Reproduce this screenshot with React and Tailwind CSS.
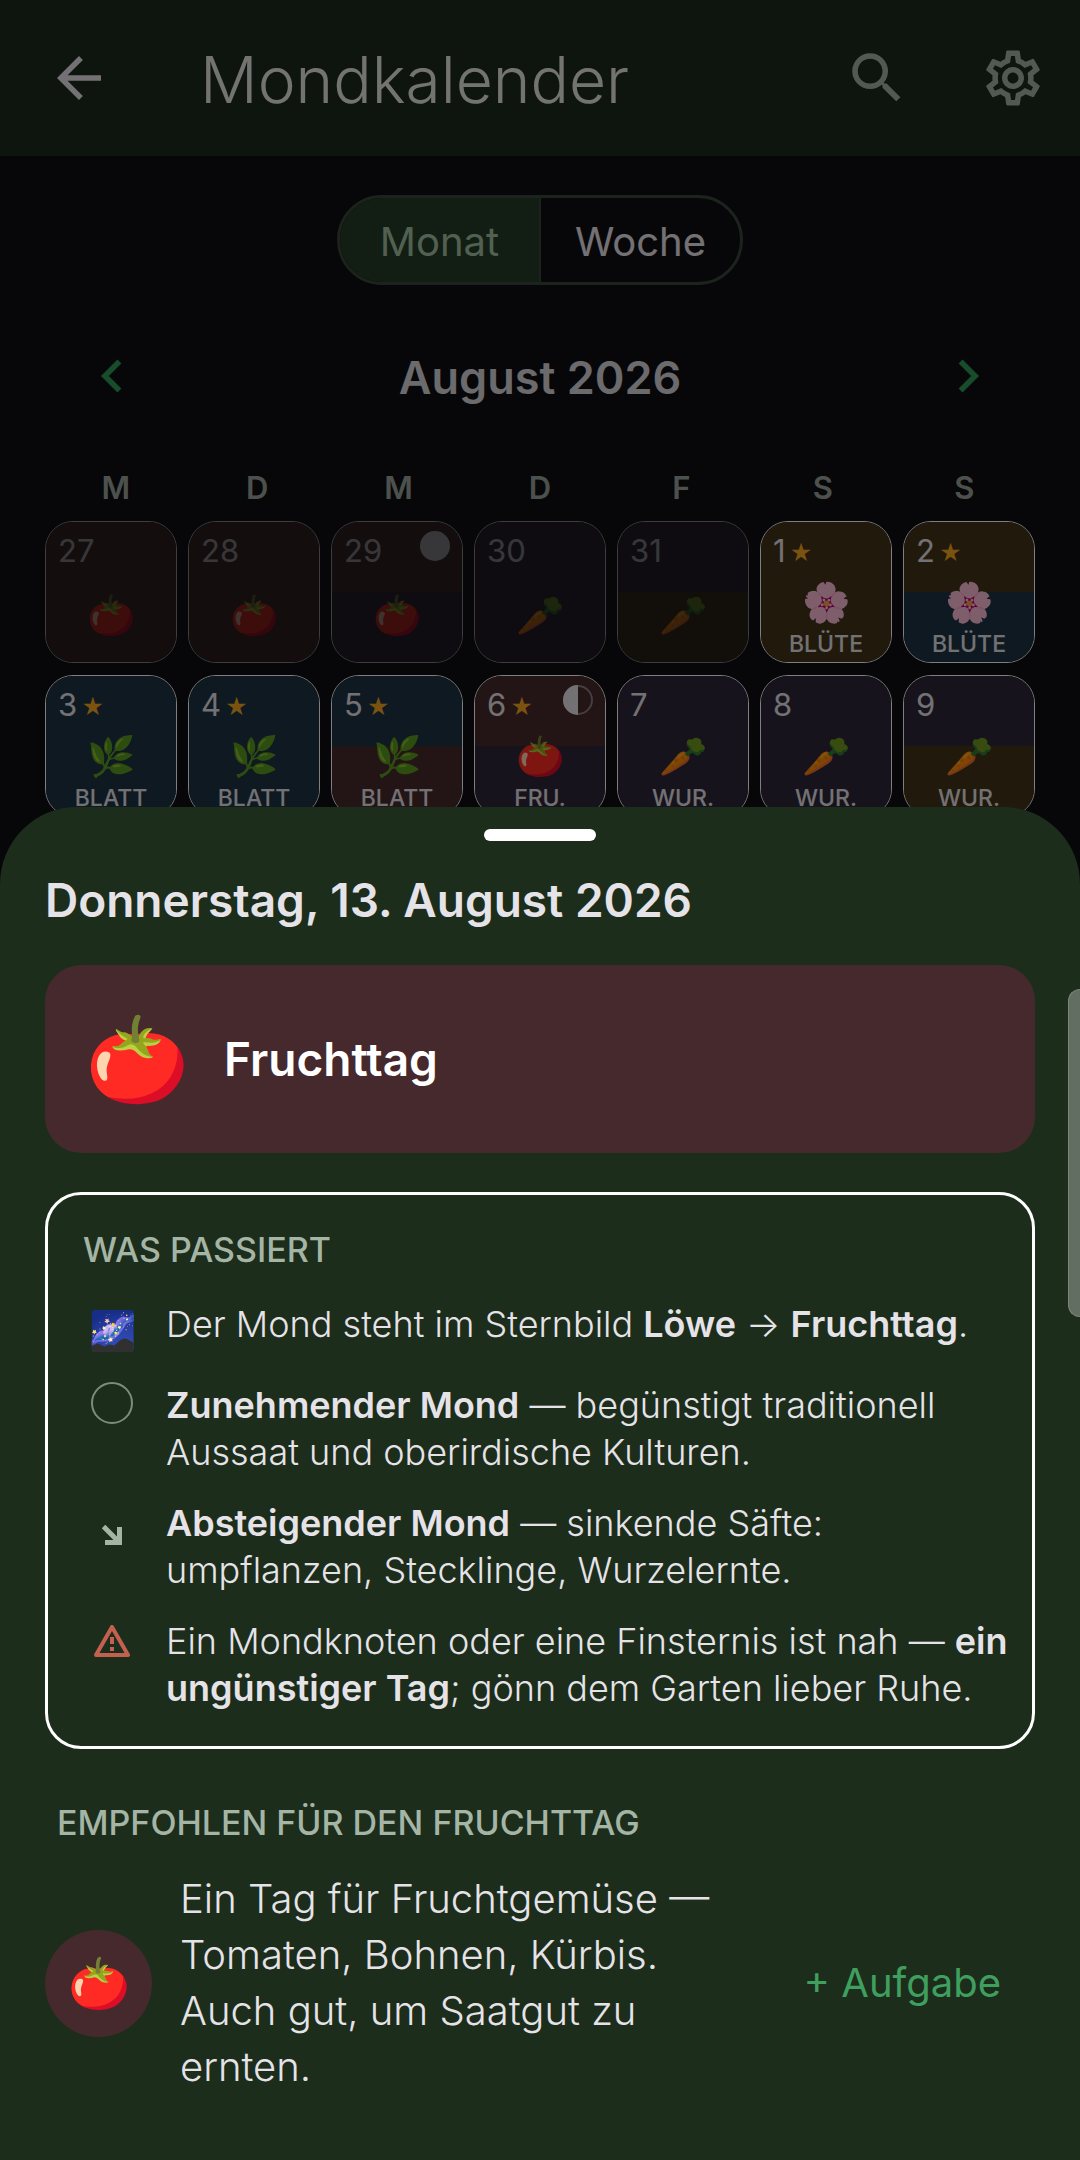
import { MdArrowBack, MdSearch, MdOutlineSettings, MdChevronLeft, MdChevronRight } from "react-icons/md";

const weekdays = ["M", "D", "M", "D", "F", "S", "S"];

const types = {
  fruit: { emoji: "🍅", label: "FRU." },
  root: { emoji: "🥕", label: "WUR." },
  flower: { emoji: "🌸", label: "BLÜTE" },
  leaf: { emoji: "🌿", label: "BLATT" },
};

const backgrounds = {
  fruit: "bg-[#46292c]",
  root: "bg-[#2e2638]",
  flower: "bg-[#403318]",
  leaf: "bg-[#1c3343]",
};

const days = [
  { day: 27, type: "fruit", outside: true },
  { day: 28, type: "fruit", outside: true },
  { day: 29, type: "fruit", next: "root", moon: "full", outside: true },
  { day: 30, type: "root", outside: true },
  { day: 31, type: "root", next: "flower", outside: true },
  { day: 1, type: "flower", star: true },
  { day: 2, type: "flower", next: "leaf", star: true },
  { day: 3, type: "leaf", star: true },
  { day: 4, type: "leaf", star: true },
  { day: 5, type: "leaf", next: "fruit", star: true },
  { day: 6, type: "fruit", next: "root", moon: "half", star: true },
  { day: 7, type: "root" },
  { day: 8, type: "root" },
  { day: 9, type: "root", next: "flower" },
];

function Header() {
  return (
    <header className="flex items-center bg-[#1c2a1c] h-[156px] pl-[46px] pr-[34px] text-[#a5b3a5]">
      <button aria-label="Zurück" className="text-[#e6e3e8]">
        <MdArrowBack size={66} />
      </button>
      <h1 className="flex-1 pt-1 pl-[88px] text-[64px] leading-[76px] font-light text-[#e6e8e3]">
        Mondkalender
      </h1>
      <div className="flex gap-[70px]">
        <button aria-label="Suche">
          <MdSearch size={66} />
        </button>
        <button aria-label="Einstellungen">
          <MdOutlineSettings size={66} />
        </button>
      </div>
    </header>
  );
}

function ViewToggle() {
  return (
    <div className="flex w-[406px] h-[90px] mx-auto rounded-full border-3 border-[#38463a] overflow-hidden text-[40px]">
      <button className="flex-1 pt-1 bg-[#243c26] text-[#a5c0a5] border-r-2 border-[#38463a]">
        Monat
      </button>
      <button className="flex-1 pt-1 text-[#e6e3e8]">Woche</button>
    </div>
  );
}

function Moon({ phase }) {
  return (
    <svg viewBox="0 0 30 30" className="ml-auto size-[30px]">
      {phase === "full" ? (
        <circle cx="15" cy="15" r="15" fill="#e6e3e8" />
      ) : (
        <>
          <circle cx="15" cy="15" r="14" fill="none" stroke="#8b7a7c" strokeWidth="2" />
          <path d="M15 0a15 15 0 0 0 0 30z" fill="#e6e3e8" />
        </>
      )}
    </svg>
  );
}

function DayCell({ day, type, next, moon, star, outside }) {
  return (
    <button
      className={`relative h-[142px] flex flex-col rounded-[28px] border border-white overflow-hidden text-[#e6e3e8] ${
        outside ? "opacity-45" : ""
      }`}
    >
      <span className="absolute inset-0 flex flex-col">
        <span className={`flex-1 ${backgrounds[type]}`} />
        <span className={`flex-1 ${backgrounds[next || type]}`} />
      </span>
      <span className="relative flex w-full h-[46px] pt-[9px] px-3">
        <span className="text-[31px] leading-[40px]">{day}</span>
        {star && <span className="pl-1 text-[22px] leading-[44px] text-[#f5a623]">★</span>}
        {moon && <Moon phase={moon} />}
      </span>
      <span className="relative flex flex-1 w-full flex-col items-center justify-center">
        <span className="text-[39px] leading-[56px]">{types[type].emoji}</span>
        {!outside && (
          <span className="pt-[2px] text-[23px] leading-[24px] font-medium">
            {types[type].label}
          </span>
        )}
      </span>
    </button>
  );
}

function Calendar() {
  return (
    <main className="px-[45px] pt-[39px]">
      <ViewToggle />
      <div className="flex items-center justify-between px-[34px] pt-[58px]">
        <button aria-label="Vorheriger Monat" className="text-[#2f9a55]">
          <MdChevronLeft size={66} />
        </button>
        <h2 className="pt-1 text-[45px] leading-[62px] font-semibold text-[#d6d4d8]">
          August 2026
        </h2>
        <button aria-label="Nächster Monat" className="text-[#2f9a55]">
          <MdChevronRight size={66} />
        </button>
      </div>
      <div className="grid grid-cols-7 pt-[59px] pb-[13px] text-center text-[31px] leading-[40px] font-semibold text-[#9aa39a]">
        {weekdays.map((name, idx) => (
          <span key={idx}>{name}</span>
        ))}
      </div>
      <div className="grid grid-cols-7 gap-x-[11px] gap-y-3">
        {days.map((d) => (
          <DayCell key={d.day} {...d} />
        ))}
      </div>
    </main>
  );
}

function Fact({ icon, children }) {
  return (
    <li className="flex min-h-[57px]">
      <span className="flex w-[58px] h-[42px] shrink-0 items-center justify-center">{icon}</span>
      <p className="flex-1 pl-[25px]">{children}</p>
    </li>
  );
}

function WhatHappens() {
  return (
    <section className="mt-[39px] rounded-[36px] border-3 border-white pt-[35px] pb-[34px] pl-[35px] pr-[20px]">
      <h3 className="text-[34px] leading-[40px] font-medium text-[#a5b5a5]">WAS PASSIERT</h3>
      <ul className="flex flex-col gap-6 pt-[31px] text-[36px] leading-[47px] font-light text-[#e6e3e8]">
        <Fact icon={<span className="pt-4 text-[38px] leading-[42px]">🌌</span>}>
          Der Mond steht im Sternbild <b className="font-semibold">Löwe</b> →{" "}
          <b className="font-semibold">Fruchttag</b>.
        </Fact>
        <Fact icon={<span className="size-[42px] rounded-full border-2 border-[#7b8d7b]" />}>
          <b className="font-semibold">Zunehmender Mond</b> — begünstigt traditionell Aussaat und
          oberirdische Kulturen.
        </Fact>
        <Fact
          icon={
            <svg viewBox="0 0 20 20" className="mt-7 size-5 shrink-0">
              <path d="M1.500 1.500l14 14M17.500 2v15.500H3" fill="none" stroke="#a5b5a5" strokeWidth="5" />
            </svg>
          }
        >
          <b className="font-semibold">Absteigender Mond</b> — sinkende Säfte:
          <br />
          umpflanzen, Stecklinge, Wurzelernte.
        </Fact>
        <Fact
          icon={
            <svg viewBox="0 0 36 32" className="mt-1 w-9 h-8 shrink-0">
              <path
                d="M18 2L34 30H2z"
                fill="none"
                stroke="#c4604f"
                strokeWidth="4"
                strokeLinejoin="round"
              />
              <path d="M18 12v7M18 22v4" stroke="#c4604f" strokeWidth="4" />
            </svg>
          }
        >
          Ein Mondknoten oder eine Finsternis ist nah — <b className="font-semibold">ein</b>
          <br />
          <b className="font-semibold">ungünstiger Tag</b>; gönn dem Garten lieber Ruhe.
        </Fact>
      </ul>
    </section>
  );
}

function DaySheet() {
  return (
    <div
      role="dialog"
      aria-label="Donnerstag, 13. August 2026"
      className="absolute inset-x-0 bottom-0 rounded-t-[77px] bg-[#1c2d1c] px-[45px] pt-[22px] pb-[65px] text-[#e6e3e8]"
    >
      <div className="w-28 h-3 mx-auto rounded-full bg-white" />
      <h2 className="pt-[29px] text-[46px] leading-[60px] font-semibold">
        Donnerstag, 13. August 2026
      </h2>
      <div className="mt-[35px] flex h-[188px] items-center rounded-[36px] bg-[#46292c] px-[40px] text-white">
        <span className="text-[84px] leading-[100px]">🍅</span>
        <span className="pl-[34px] text-[46px] leading-[60px] font-semibold">Fruchttag</span>
      </div>
      <WhatHappens />
      <h3 className="pt-[54px] pl-3 text-[34px] leading-[40px] font-medium text-[#a5b5a5]">
        EMPFOHLEN FÜR DEN FRUCHTTAG
      </h3>
      <div className="flex items-center pt-[28px]">
        <span className="flex size-[107px] shrink-0 items-center justify-center rounded-full bg-[#46292c] text-[50px]">
          🍅
        </span>
        <p className="w-[560px] pl-7 text-[40px] leading-[56px] font-light">
          Ein Tag für Fruchtgemüse — Tomaten, Bohnen, Kürbis. Auch gut, um Saatgut zu ernten.
        </p>
        <button className="ml-auto mr-[34px] text-[40px] leading-[56px] text-[#3f9f5f]">
          + Aufgabe
        </button>
      </div>
    </div>
  );
}

export default function App() {
  return (
    <div className="relative min-h-screen overflow-hidden bg-[#0e0e12] font-[Inter,'Noto_Sans',sans-serif]">
      <Header />
      <Calendar />
      <div className="absolute inset-0 bg-black/50" />
      <DaySheet />
      <div className="absolute right-0 top-[989px] w-3 h-[328px] rounded-l-xl border border-r-0 border-[#7a877a] bg-[#626e62]" />
    </div>
  );
}
